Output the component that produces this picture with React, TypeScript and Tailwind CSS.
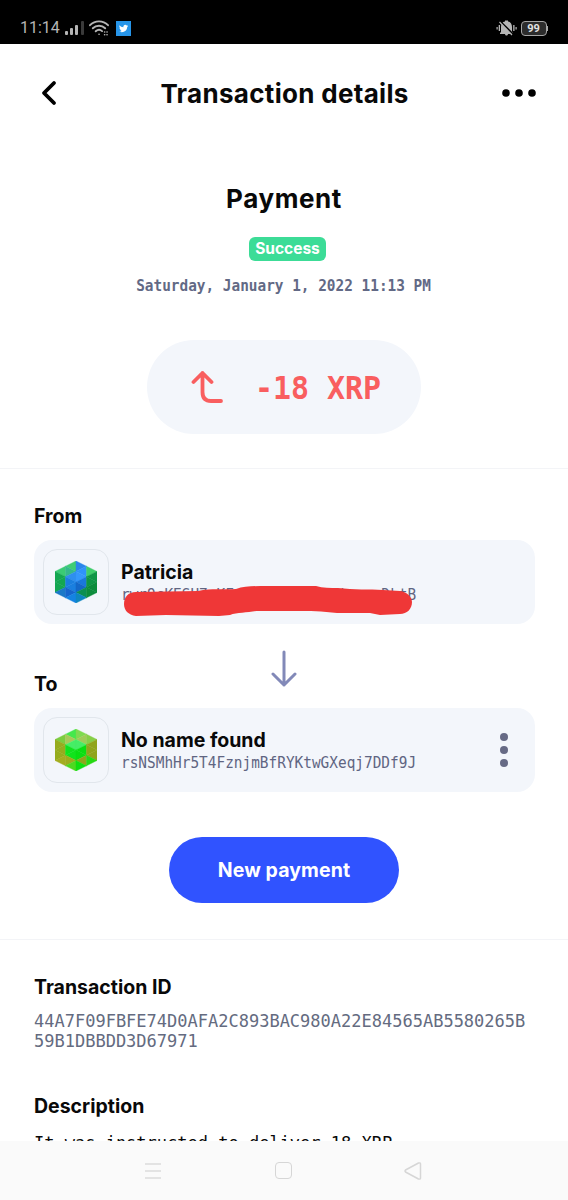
import React from 'react';
import { ChevronLeft } from 'lucide-react';

const SANS = "font-['Inter','Open_Sans',sans-serif]";
const MONO = "font-['DejaVu_Sans_Mono','Liberation_Mono',monospace]";

// triangular grid of the account cube, listed column by column
const TRIANGLES: number[][] = [
  [0, 2, 2, 1, 2, 3], [0, 2, 0, 4, 2, 3], [0, 4, 2, 3, 2, 5], [0, 4, 0, 6, 2, 5], [0, 6, 2, 5, 2, 7],
  [2, 1, 4, 0, 4, 2], [2, 1, 2, 3, 4, 2], [2, 3, 4, 2, 4, 4], [2, 3, 2, 5, 4, 4], [2, 5, 4, 4, 4, 6], [2, 5, 2, 7, 4, 6], [2, 7, 4, 6, 4, 8],
  [6, 1, 4, 0, 4, 2], [6, 1, 6, 3, 4, 2], [6, 3, 4, 2, 4, 4], [6, 3, 6, 5, 4, 4], [6, 5, 4, 4, 4, 6], [6, 5, 6, 7, 4, 6], [6, 7, 4, 6, 4, 8],
  [8, 2, 6, 1, 6, 3], [8, 2, 8, 4, 6, 3], [8, 4, 6, 3, 6, 5], [8, 4, 8, 6, 6, 5], [8, 6, 6, 5, 6, 7],
];

const PATRICIA = [
  '#3bcb74', '#14a751', '#14a751', '#14a751', '#1a78c8',
  '#3fcd74', '#35b98c', '#2e8fef', '#1a7fdf', '#1a7fdf', '#1565cc', '#1483e2',
  '#2b86ea', '#2f93fa', '#3598fb', '#1a78dc', '#1468c8', '#0c8f52', '#0f86c0',
  '#3fcd6b', '#0f9646', '#0f9646', '#0c8c3c', '#0c8c3c',
];

const UNKNOWN = [
  '#7ccc40', '#96ac1e', '#96ac1e', '#96ac1e', '#a3ad20',
  '#45e84c', '#a8c95a', '#45ee66', '#10e31c', '#10e31c', '#9dac1e', '#4ed820',
  '#7edb50', '#9fcc58', '#45ee66', '#0adf12', '#0adf12', '#8ea61c', '#0fe010',
  '#86cf48', '#90a41c', '#90a41c', '#90a41c', '#26d813',
];

function Cube({ colors }: { colors: string[] }) {
  return (
    <svg viewBox="0 0 8 8" preserveAspectRatio="none" className="h-[42px] w-[42px]">
      {TRIANGLES.map((t, i) => (
        <polygon key={i} points={t.join(' ')} fill={colors[i]} stroke={colors[i]} strokeWidth="0.08" />
      ))}
    </svg>
  );
}

function Account({ name, address, colors, children }: { name: string, address: string, colors: string[], children?: React.ReactNode }) {
  return (
    <div className="relative flex h-21 items-center rounded-[18px] bg-[#f3f6fb] pl-[9px]">
      <div className="flex h-[66px] w-[66px] shrink-0 items-center justify-center rounded-[14px] border-[1.5px] border-[#e1e6ec]">
        <Cube colors={colors} />
      </div>
      <div className="ml-[12px] flex-1 pt-[3px]">
        <div className="text-[19.5px] leading-[22px] font-bold">{name}</div>
        <div className={`${MONO} mt-[2px] h-[21px] origin-left scale-x-[0.93] text-[15.5px] leading-[21px] whitespace-nowrap text-[#5f6582]`}>{address}</div>
      </div>
      {children}
    </div>
  );
}

function StatusBar() {
  return (
    <div className="flex h-11 shrink-0 items-center bg-black pt-3 pr-5 pl-5 text-[#b5b5b5]">
      <span className="w-10 font-['Roboto',sans-serif] text-[16px] leading-5 whitespace-nowrap">11:14</span>
      <svg width="20" height="16" viewBox="0 0 20 16" className="ml-[5px]" fill="currentColor">
        <rect x="0" y="11" width="3" height="4" rx="1" />
        <rect x="5" y="8" width="3" height="7" rx="1" />
        <rect x="10" y="5" width="3" height="10" rx="1" />
        <rect x="16" y="1" width="3" height="14" rx="1" fill="#3a3a3a" />
      </svg>
      <svg width="20" height="16" viewBox="0 0 20 16" className="ml-[4px]" fill="none" stroke="currentColor" strokeWidth="1.9" strokeLinecap="round">
        <path d="M1 5.2C6 .1 14 .1 19 5.2" />
        <path d="M3.8 8.3c3.5-3.4 8.9-3.4 12.4 0" />
        <path d="M6.7 11.3c2-1.8 4.6-1.8 6.4-.2" />
        <path d="M10 14.3h.1M15.6 12h.1M18 12h.1M15.6 14.8h.1M18 14.8h.1" strokeWidth="1.6" />
      </svg>
      <svg width="15" height="15" viewBox="0 0 15 15" className="ml-[7px]">
        <rect width="15" height="15" fill="#2795e9" />
        <path d="M3.4 4.2c1 1.2 2.4 1.9 4 2-.4-2 1.9-3.1 3.3-1.8l1.2-.4-.7 1.1.9-.1-.9 1c0 4-4.2 6.4-7.9 4.6 1 0 1.7-.2 2.4-.7-.8-.1-1.4-.6-1.6-1.3h.8c-.9-.3-1.4-.9-1.4-1.8l.7.2c-.8-.7-1-1.8-.8-2.8z" fill="#fff" />
      </svg>
      <svg width="21" height="16" viewBox="0 0 21 16" className="ml-auto" fill="currentColor">
        <path d="M5 12V7c0-3 1.5-5.2 4-5.6V.6h3v.8C14.5 1.8 16 4 16 7v4.5L17 13v1h-5c-.3 2-2.7 2-3 0H4v-1z" />
        <rect x="2.7" y="5" width="1.3" height="6" />
        <rect x="0.5" y="7" width="1.2" height="2.5" />
        <rect x="17.2" y="5" width="1.3" height="6" />
        <rect x="19.5" y="7" width="1.2" height="2.5" />
        <path d="M4.5 1.5l13 13" stroke="#000" strokeWidth="1.6" />
        <path d="M3.5 2l12.5 13" stroke="currentColor" strokeWidth="1.2" />
      </svg>
      <div className="ml-[4px] flex h-[15px] w-[26px] items-center justify-center rounded-[4px] border-[1.5px] border-[#a5a5a5] bg-[#2c2c2c] font-['Roboto',sans-serif] text-[11px] leading-none font-bold text-[#e2e2e2]">99</div>
      <div className="h-[5px] w-[1.5px] bg-[#a5a5a5]" />
    </div>
  );
}

export default function App() {
  return (
    <div className={`${SANS} flex h-[1200px] w-[568px] flex-col overflow-hidden bg-white text-[#090909]`}>
      <StatusBar />

      <main className="min-h-0 flex-1 overflow-hidden">
        <header className="flex h-[98px] items-center justify-between pr-[31px] pl-[29px]">
          <ChevronLeft className="h-[40px] w-[40px] text-black" strokeWidth={2.3} />
          <h1 className="pt-[2px] pr-[2px] text-[26px] leading-[34px] font-bold tracking-[0.3px] whitespace-nowrap">Transaction details</h1>
          <svg width="35" height="8" viewBox="0 0 35 8">
            <circle cx="4" cy="4" r="3.8" />
            <circle cx="17" cy="4" r="3.8" />
            <circle cx="30" cy="4" r="3.8" />
          </svg>
        </header>

        <section className="flex h-[327px] flex-col items-center border-b-[1.5px] border-[#f3f4f7] pt-[40px]">
          <h2 className="text-[26px] leading-[34px] font-bold tracking-[0.6px]">Payment</h2>
          <span className="mt-[21px] ml-[7px] flex h-6 w-[77px] shrink-0 items-center justify-center rounded-[6px] bg-[#3cdc97] text-[15.5px] leading-none font-bold text-white">Success</span>
          <div className={`${MONO} mt-[15px] scale-x-[0.96] text-[15px] leading-5 font-bold whitespace-nowrap text-[#626985]`}>Saturday, January 1, 2022 11:13 PM</div>
          <div className="mt-[44px] flex h-[94px] w-[274px] shrink-0 items-center rounded-full bg-[#f3f6fb] pl-[44px] text-[#f95e5f]">
            <svg width="34" height="34" viewBox="0 0 34 34" fill="none" stroke="currentColor" strokeWidth="3.8" strokeLinecap="round" strokeLinejoin="round">
              <path d="M2.5 12L11.5 3L20.5 12M11.5 3V22Q11.5 31 20 31H30" />
            </svg>
            <span className={`${MONO} ml-[30px] origin-left scale-x-[0.935] pt-[2px] text-[32px] leading-none font-bold whitespace-nowrap`}>-18 XRP</span>
          </div>
        </section>

        <section className="h-[471px] border-b-[1.5px] border-[#f3f4f7] pt-[35px] pr-[33px] pl-[34px]">
          <h3 className="h-[36px] text-[19.5px] leading-6 font-bold">From</h3>
          <Account name="Patricia" address="rwr9cKESH7cKFaaaaaaaaaaaaiaaaaDktB" colors={PATRICIA}>
            <svg className="absolute top-[46px] left-[90px]" width="288" height="32" viewBox="0 0 288 32" fill="#ef3737">
              <path d="M12 6L74 5C88 2 99 4 112 3C121 0 132 0 143 0L192 0C199 2 206 2 214 2C230 4 245 3 259 4L276 5C283 6 288 11 288 16C288 23 283 28 276 28L256 29L246 27L213 27L197 25.5L187 25L150 25L132 25C123 27 113 26 106 29L95 30L42 29L12 30C4 29 0 24 0 18C0 11 4 6 12 6Z" />
            </svg>
          </Account>
          <div className="flex h-[84px] items-start">
            <h3 className="w-[233px] pt-[48px] text-[19.5px] leading-6 font-bold">To</h3>
            <svg width="34" height="38" viewBox="0 0 34 38" className="mt-[25px]" fill="none" stroke="#8289b8" strokeWidth="3" strokeLinecap="round" strokeLinejoin="round">
              <path d="M17 3V36M6 25L17 36L28 25" />
            </svg>
          </div>
          <Account name="No name found" address="rsNSMhHr5T4FznjmBfRYKtwGXeqj7DDf9J" colors={UNKNOWN}>
            <svg width="10" height="36" viewBox="0 0 10 36" className="mr-[26px]" fill="#666a85">
              <circle cx="5" cy="5" r="4" />
              <circle cx="5" cy="18" r="4" />
              <circle cx="5" cy="31" r="4" />
            </svg>
          </Account>
          <button className="mt-[45px] ml-[135px] block h-[66px] w-[230px] rounded-full bg-[#3053ff] pt-[2px] text-[19.5px] font-bold tracking-[0.1px] text-white">New payment</button>
        </section>

        <section className="px-[34px] pt-[35px]">
          <h3 className="text-[19.5px] leading-6 font-bold">Transaction ID</h3>
          <p className={`${MONO} mt-[12px] text-[17px] leading-5 text-[#646b80]`}>
            44A7F09FBFE74D0AFA2C893BAC980A22E84565AB5580265B
            <br />
            59B1DBBDD3D67971
          </p>
          <h3 className="mt-[43px] text-[19.5px] leading-6 font-bold">Description</h3>
          <p className={`${MONO} mt-[15px] text-[17px] leading-5 whitespace-nowrap`}>It was instructed to deliver 18 XRP</p>
        </section>
      </main>

      <nav className="flex h-[59px] shrink-0 items-center justify-between bg-[#fafafa] pr-[146px] pl-[144px]">
        <svg width="18" height="18" viewBox="0 0 18 18" stroke="#dcdcdc" strokeWidth="1.5"><path d="M1 2H17M1 9H17M1 16H17" /></svg>
        <div className="h-[17px] w-[17px] rounded-[4px] border-[1.5px] border-[#d6d6d6]" />
        <svg width="18" height="18" viewBox="0 0 18 18" fill="none" stroke="#d6d6d6" strokeWidth="1.5" strokeLinejoin="round"><path d="M1.5 8L14.5 1Q16.5 .5 16.5 2V16Q16.5 17.5 14.5 17L1.5 10Q.5 9 1.5 8Z" /></svg>
      </nav>
    </div>
  );
}
